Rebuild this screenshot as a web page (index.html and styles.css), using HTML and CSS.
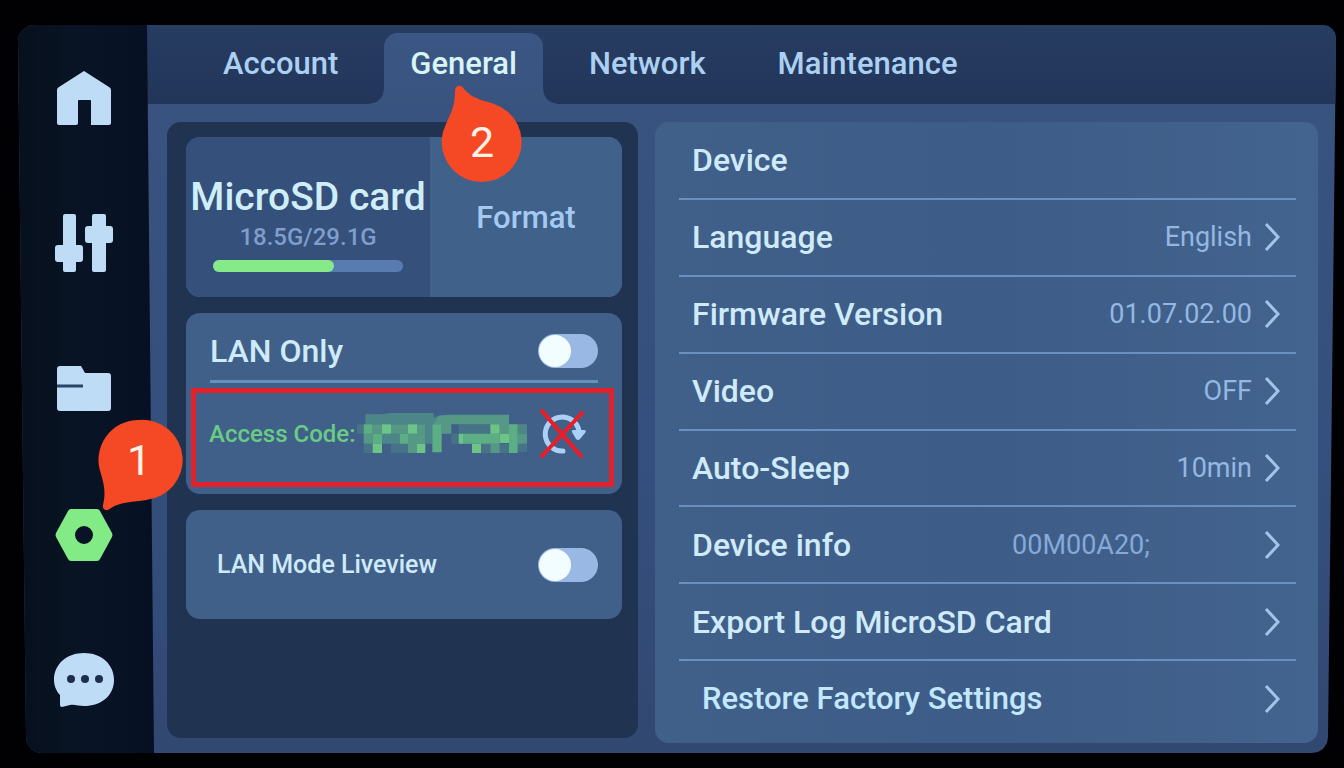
FILE: index.html
```html
<!DOCTYPE html>
<html lang="en">
<head>
  <meta charset="UTF-8" />
  <title>Printer Settings - General</title>
  <link rel="stylesheet" href="styles.css">
</head>
<body>

  <div class="screen">

    <nav class="sidebar">
      <a href="#home" aria-label="Home">
        <svg width="56" height="56" viewBox="0 0 56 56"><path d="M28 1 L53 17 Q55 18 55 20 V53 Q55 55 53 55 H35 V31 Q35 30 34 30 H23 Q22 30 22 31 V53 Q22 55 20 55 H3 Q1 55 1 53 V20 Q1 18 3 17 Z"/></svg>
      </a>
      <a href="#control" aria-label="Control">
        <svg width="60" height="60" viewBox="0 0 60 60">
          <path d="M11 1 H20 Q22 1 22 3 V32 H26 Q29 32 29 35 V46 Q29 49 26 49 H22 V57 Q22 59 20 59 H11 Q9 59 9 57 V49 H4 Q1 49 1 46 V35 Q1 32 4 32 H9 V3 Q9 1 11 1 Z"/>
          <path d="M40 1 H50 Q52 1 52 3 V13 H56 Q59 13 59 16 V27 Q59 30 56 30 H52 V57 Q52 59 50 59 H40 Q38 59 38 57 V30 H34 Q31 30 31 27 V16 Q31 13 34 13 H38 V3 Q38 1 40 1 Z"/>
        </svg>
      </a>
      <a href="#files" aria-label="Files">
        <svg width="54" height="46" viewBox="0 0 54 46">
          <path d="M3 0 H24 L28 7 H51 Q54 7 54 10 V42 Q54 45 51 45 H3 Q0 45 0 42 V3 Q0 0 3 0 Z"/>
          <path class="slot" d="M0 20 H26"/>
        </svg>
      </a>
      <a href="#settings" class="current" aria-label="Settings">
        <svg width="58" height="52" viewBox="0 0 58 52"><path fill-rule="evenodd" d="M16 0 H42 Q44 0 45 2 L57 24 Q58 26 57 28 L45 50 Q44 52 42 52 H16 Q14 52 13 50 L1 28 Q0 26 1 24 L13 2 Q14 0 16 0 Z M29 17 A9 9 0 1 0 29 35 A9 9 0 1 0 29 17 Z"/></svg>
      </a>
      <a href="#assistant" aria-label="Messages">
        <svg width="60" height="54" viewBox="0 0 60 54">
          <path d="M30 0 C47 0 60 11 60 27 C60 43 47 53 30 53 C25 53 20 51 16 52 L8 54 Q6 54 6 52 V42 C2 38 0 32 0 27 C0 11 13 0 30 0 Z"/>
          <g class="dots"><circle cx="17" cy="26" r="4"/><circle cx="31" cy="26" r="4"/><circle cx="45" cy="26" r="4"/></g>
        </svg>
      </a>
    </nav>

    <main class="main">
      <nav class="tabs">
        <a href="#account">Account</a>
        <a href="#general" class="active">General</a>
        <a href="#network">Network</a>
        <a href="#maintenance">Maintenance</a>
      </nav>

      <div class="content">
        <section class="left-panel">
          <div class="card sd-card">
            <div class="sd-info">
              <h2>MicroSD card</h2>
              <label for="sd-usage">18.5G/29.1G</label>
              <progress id="sd-usage" value="18.5" max="29.1"></progress>
            </div>
            <button type="button" class="format">Format</button>
          </div>

          <div class="card lan-card">
            <div class="lan-row">
              <label for="lan-only">LAN Only</label>
              <input type="checkbox" class="toggle" id="lan-only">
            </div>
            <div class="access-row">
              <span>Access Code:</span>
              <svg class="mosaic" width="170" height="42" viewBox="0 0 510 126" aria-hidden="true">
                <g fill="#4d8688">
                  <path d="M25 4 H52 V34 H25 Z M75 4 L102 0 H230 V14 L245 8 L283 4 V34 H52 V4 Z M205 34 H226 V92 H205 Z M75 62 H128 V92 H75 Z M482 34 H510 V62 H482 Z"/>
                  <path d="M0 34 H20 V62 H0 Z M20 92 H47 V120 H20 Z M102 92 H153 V120 H102 Z M305 34 H400 V62 H305 Z M283 62 H305 V92 H283 Z M372 92 H400 V120 H372 Z M428 92 H456 V120 H428 Z M482 92 H510 V116 H482 Z" opacity=".5"/>
                </g>
                <g fill="#549885">
                  <path d="M245 8 L283 5 H456 V34 H283 V62 H254 V34 H230 Z M47 34 H75 V62 H47 Z M102 34 H153 V62 H102 Z M180 34 H205 V92 H153 V62 H180 Z M20 62 H47 V92 H20 Z M400 92 H428 V120 H400 Z M482 62 H510 V92 H482 Z M153 92 H180 V120 H153 Z M428 34 H456 V62 H428 Z"/>
                </g>
                <g fill="#5cae85">
                  <path d="M20 34 H47 V62 H20 Z M47 62 H75 V92 H47 Z M128 62 H153 V92 H128 Z M226 34 H254 V118 H226 Z M318 62 H428 V92 H318 Z M456 34 H482 V62 H456 Z M456 62 H482 V120 H456 Z"/>
                </g>
                <g fill="#6cc586">
                  <path d="M75 34 H102 V62 H75 Z M153 34 H180 V62 H153 Z M47 92 H75 V120 H47 Z M180 92 H205 V120 H180 Z M305 62 H318 V92 H305 Z M345 92 H372 V120 H345 Z M400 34 H428 V62 H400 Z M428 62 H456 V90 H428 Z"/>
                </g>
              </svg>
              <button type="button" class="refresh" aria-label="Refresh access code">
                <svg width="48" height="52" viewBox="0 0 48 52">
                  <path class="arc" d="M24 43 A17 17 0 1 1 40 23"/>
                  <path class="head" d="M33 24 Q32 22 35 22 H45 Q48 22 46 25 L41 31 Q39 33 37 31 Z"/>
                  <path class="cross" d="M3 3 L42 48 M43 5 L3 48"/>
                </svg>
              </button>
            </div>
          </div>

          <div class="card live-card">
            <label for="liveview">LAN Mode Liveview</label>
            <input type="checkbox" class="toggle" id="liveview">
          </div>
        </section>

        <ul class="right-panel">
          <li><span class="row">Device</span></li>
          <li><a href="#language" class="row">Language <span class="value">English</span> <svg class="chevron" viewBox="0 0 16 30"><path d="M2 2 L14 15 L2 28"/></svg></a></li>
          <li><a href="#firmware" class="row">Firmware Version <span class="value">01.07.02.00</span> <svg class="chevron" viewBox="0 0 16 30"><path d="M2 2 L14 15 L2 28"/></svg></a></li>
          <li><a href="#video" class="row">Video <span class="value">OFF</span> <svg class="chevron" viewBox="0 0 16 30"><path d="M2 2 L14 15 L2 28"/></svg></a></li>
          <li><a href="#sleep" class="row">Auto-Sleep <span class="value">10min</span> <svg class="chevron" viewBox="0 0 16 30"><path d="M2 2 L14 15 L2 28"/></svg></a></li>
          <li><a href="#info" class="row">Device info <span class="value serial">00M00A20;</span> <svg class="chevron" viewBox="0 0 16 30"><path d="M2 2 L14 15 L2 28"/></svg></a></li>
          <li><a href="#log" class="row">Export Log MicroSD Card <svg class="chevron" viewBox="0 0 16 30"><path d="M2 2 L14 15 L2 28"/></svg></a></li>
          <li><a href="#restore" class="row restore">Restore Factory Settings <svg class="chevron" viewBox="0 0 16 30"><path d="M2 2 L14 15 L2 28"/></svg></a></li>
        </ul>
      </div>
    </main>

    <!-- step markers -->
    <div class="pin pin-one">
      <svg width="82" height="92" viewBox="0 0 82 92"><path d="M41 1 A40 40 0 1 1 48 81 C36 83 22 83 13 89 C9 93 4 91 5 86 C8 73 6 66 3 55 A40 40 0 0 1 41 1 Z"/></svg>
      <span>1</span>
    </div>
    <div class="pin pin-two">
      <svg width="82" height="98" viewBox="0 0 82 98"><path d="M14 6 C14 0 20 -1 23 4 C31 14 42 15 53 19 A40 40 0 1 1 5 39 C10 28 14 21 14 6 Z"/></svg>
      <span>2</span>
    </div>

  </div>

</body>
</html>
```
FILE: styles.css
```css
* {
  box-sizing: border-box;
}

body {
  margin: 0;
  background: #010103;
  color: #cfeaf8;
  font-family: Roboto, "Noto Sans", sans-serif;
  font-size: 32px;
  font-weight: 500;
  min-height: 100vh;
  display: flex;
}

a {
  color: inherit;
  text-decoration: none;
}

button {
  font: inherit;
  color: inherit;
  border: none;
  padding: 0;
  cursor: pointer;
}

.screen {
  position: relative;
  flex: 1;
  display: flex;
  margin: 25px 8px 15px 18px;
  background: linear-gradient(#3a5480, #354f7e 60%, #314871);
  /* the display narrows slightly towards the bottom */
  clip-path: polygon(0 16px, 1px 10px, 5px 5px, 10px 1px, 16px 0, calc(100% - 14px) 0, calc(100% - 8px) 1px, calc(100% - 4px) 4px, calc(100% - 1px) 8px, 100% 14px, calc(100% - 8px) calc(100% - 16px), calc(100% - 9px) calc(100% - 10px), calc(100% - 13px) calc(100% - 4px), calc(100% - 18px) calc(100% - 1px), calc(100% - 24px) 100%, 24px 100%, 18px calc(100% - 1px), 13px calc(100% - 4px), 9px calc(100% - 10px), 8px calc(100% - 16px));
}

/* sidebar */
.sidebar {
  width: 136px;
  padding-right: 4px;
  display: flex;
  flex-direction: column;
  background: linear-gradient(90deg, #07101c, #081426 50%, #061022);
  clip-path: polygon(0 0, 129px 0, 100% 100%, 0 100%);
}

.sidebar a {
  flex: 1;
  display: flex;
  align-items: center;
  justify-content: center;
  fill: #bfdcf7;
}

.sidebar a.current {
  fill: #82eb86;
}

.sidebar .slot {
  stroke: #2b4468;
  stroke-width: 3;
}

.sidebar .dots {
  fill: #1c2e4c;
}

/* tabs */
.main {
  flex: 1;
  min-width: 0;
  display: flex;
  flex-direction: column;
}

.tabs {
  height: 79px;
  margin-left: -7px;
  padding: 8px 0 0 40px;
  display: flex;
  background: linear-gradient(#273c61, #22365a);
  font-size: 31px;
  position: relative;
  z-index: -1;
}

.tabs a {
  padding: 12px 36px 0;
  line-height: 38px;
  color: #acd0f2;
}

.tabs a.active {
  position: relative;
  margin: 0 10px;
  padding: 12px 26px 0;
  background: linear-gradient(#3b5684, #3a5480);
  border-radius: 14px 14px 0 0;
  color: #d8f5f5;
}

.tabs a.active::before,
.tabs a.active::after {
  content: "";
  position: absolute;
  bottom: 0;
  width: 14px;
  height: 14px;
}

.tabs a.active::before {
  right: 100%;
  background: radial-gradient(circle at 0 0, transparent 13px, #3a5480 14px);
}

.tabs a.active::after {
  left: 100%;
  background: radial-gradient(circle at 100% 0, transparent 13px, #3a5480 14px);
}

/* content */
.content {
  flex: 1;
  display: flex;
  gap: 17px;
  padding: 18px 18px 10px 13px;
}

.left-panel {
  flex: 0 1 471px;
  margin-bottom: 5px;
  padding: 15px 16px 0 19px;
  display: flex;
  flex-direction: column;
  gap: 16px;
  background: #203452;
  border-radius: 14px;
}

.card {
  background: #40608a;
  border-radius: 14px;
}

.sd-card {
  display: flex;
  height: 160px;
  overflow: hidden;
}

.sd-info {
  flex: 0 0 244px;
  display: flex;
  flex-direction: column;
  align-items: center;
  padding-top: 36px;
  background: #34507b;
  color: #7f9dcd;
  font-size: 24px;
  line-height: 32px;
}

.sd-info h2 {
  margin: 0;
  color: #cfeef8;
  font-size: 39px;
  font-weight: 500;
  line-height: 48px;
}

.sd-info progress {
  appearance: none;
  width: 190px;
  height: 12px;
  margin-top: 7px;
  border: none;
}

.sd-info progress::-webkit-progress-bar {
  background: #587bb0;
  border-radius: 6px;
}

.sd-info progress::-webkit-progress-value {
  background: #86ea8b;
  border-radius: 6px;
}

.format {
  flex: 1;
  background: #40618a;
  color: #a4caf2;
  font-size: 31px;
}

.lan-row {
  display: flex;
  align-items: center;
  justify-content: space-between;
  height: 70px;
  margin: 0 24px 5px;
  padding-top: 8px;
  border-bottom: 3px solid #6591bd;
}

.toggle {
  appearance: none;
  width: 60px;
  height: 34px;
  margin: 0;
  padding: 1px;
  border-radius: 17px;
  background: #99b9e4;
}

.toggle::before {
  content: "";
  display: block;
  width: 32px;
  height: 32px;
  border-radius: 50%;
  background: #f2fdff;
}

.toggle:checked::before {
  margin-left: auto;
}

.access-row {
  display: flex;
  align-items: center;
  height: 99px;
  margin: 0 8px 7px 5px;
  padding: 0 22px 7px 13px;
  border: 5px solid #df222c;
  color: #69cc85;
  font-size: 24px;
}

.mosaic {
  margin-left: 2px;
}

.refresh {
  margin-left: auto;
  background: none;
  display: flex;
}

.refresh path {
  fill: none;
  stroke-linecap: round;
}

.refresh .arc {
  stroke: #acd0f5;
  stroke-width: 5;
}

.refresh .head {
  fill: #acd0f5;
}

.refresh .cross {
  stroke: #ee1c25;
  stroke-width: 4;
}

.live-card {
  display: flex;
  align-items: center;
  justify-content: space-between;
  height: 109px;
  padding: 0 24px 0 31px;
  font-size: 25px;
}

.right-panel {
  flex: 1;
  display: flex;
  flex-direction: column;
  margin: 0;
  padding: 1px 22px 7px 24px;
  list-style: none;
  background: linear-gradient(90deg, #40608a, #3d5c87 50%, #43648e);
  border-radius: 14px;
}

.right-panel li {
  flex: 1;
  display: flex;
  border-bottom: 2px solid #6a90c2;
}

.right-panel li:last-child {
  border-bottom: none;
}

.row {
  flex: 1;
  display: flex;
  align-items: center;
  padding: 0 16px 0 13px;
}

.row.restore {
  padding-left: 23px;
  font-size: 31px;
  color: #c2e8fd;
}

.value {
  margin-left: auto;
  color: #94b7e4;
  font-size: 27px;
  font-weight: 400;
}

.value.serial {
  margin-right: 102px;
  color: #86a9da;
}

.chevron {
  width: 16px;
  height: 30px;
  margin-left: 12px;
  fill: none;
  stroke: #a3c4ea;
  stroke-width: 3;
}

.row > .chevron:only-child {
  margin-left: auto;
}

/* step markers */
.pin {
  position: absolute;
  width: 82px;
  color: #fdf3e6;
  font-size: 43px;
  font-weight: 400;
  line-height: 82px;
  text-align: center;
}

.pin svg {
  position: absolute;
  left: 0;
  top: 0;
  overflow: visible;
  fill: #f54824;
}

.pin span {
  position: relative;
}

.pin-one {
  left: 80px;
  top: 394px;
}

.pin-two {
  left: 423px;
  top: 60px;
  padding-top: 16px;
}
```
